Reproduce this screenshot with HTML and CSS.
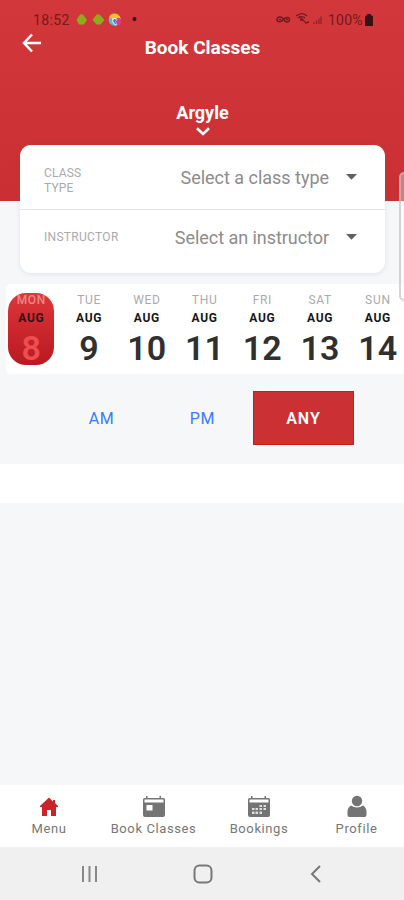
FILE: index.html
```html
<!DOCTYPE html>
<html lang="en">
<head>
<meta charset="utf-8">
<title>Book Classes</title>
<link rel="stylesheet" href="styles.css">
</head>
<body>
<div class="screen">
  <header class="header">
    <div class="status">
      <span class="clock">18:52</span>
      <svg class="apps" width="62" height="16" viewBox="0 0 62 16">
        <path d="M4 2.500h3L11 8l-3 4.500H3L.500 8z" fill="#8bad1c"/>
        <path d="M20.500 2.500h3L28.500 8l-4 4.500h-4L16.500 8z" fill="#8bad1c"/>
        <path d="M33 6c1-6 10-6 12 1l-6-1.500-4 1.500z" fill="#f8c52c"/>
        <path d="M33 5.500l4 .5 0 3.500 4 4.500c-7 0-9-4-8-8.500z" fill="#56bfd8"/>
        <path d="M45 7c1 4-1 6-3 6.500L39.500 9 42 6z" fill="#d63b83"/>
        <path d="M36 6.500l4-1 1.500 2-2 2 2 3-2 1-3-3z" fill="#f3e5e2"/>
        <path d="M38 7l3 .5-2 2 2 3-2-.5-2-3z" fill="#3d76c9"/>
        <circle cx="58.500" cy="7" r="2" fill="#351014"/>
      </svg>
      <svg class="signals" width="48" height="16" viewBox="0 0 48 16" fill="none" stroke="#74191c" stroke-width="1.500">
        <path d="M7.500 7C5.500 4 1 4.500 1 7.500s4 3 6.500 0 6-2.500 6 0-3.500 4-6 0M3 7.500h2M10 7.500h2"/>
        <path d="M20 4c4-3 8-3 11 0M22 6c3-2 5-2 7 0M24 8.500c1-1 2-1 3 0M23 4l6 6M29 11l4-1" stroke-width="1.300"/>
        <path d="M38 12v-2M40.500 12V8.500M43 12V6.500M45 12V4.500" stroke-width="1.200" opacity=".75"/>
      </svg>
      <span class="charge">100%</span>
      <svg class="battery" width="8" height="13" viewBox="0 0 8 13"><path d="M2 1.500V0h4v1.500h1l1 1V12H0V2.500l1-1z" fill="#3b1013"/></svg>
    </div>
    <div class="titlebar">
      <svg class="back" width="20" height="20" viewBox="0 0 20 20" fill="none" stroke="#fff" stroke-width="2.500"><path d="M10 1.500 2 10l8 8.500M2 10h17"/></svg>
      <h1>Book Classes</h1>
    </div>
    <div class="location">
      <span>Argyle</span>
      <svg width="14" height="9" viewBox="0 0 14 9" fill="none" stroke="#fff" stroke-width="2.600"><path d="m1 1.200 6 5.800 6-5.800"/></svg>
    </div>
  </header>

  <section class="filters">
    <div class="filter">
      <span class="label">CLASS<br>TYPE</span>
      <span class="value type">Select a class type</span>
      <svg width="11" height="6" viewBox="0 0 11 6"><path d="M0 0h11L5.500 5.800z" fill="#606060"/></svg>
    </div>
    <div class="filter second">
      <span class="label">INSTRUCTOR</span>
      <span class="value person">Select an instructor</span>
      <svg width="11" height="6" viewBox="0 0 11 6"><path d="M0 0h11L5.500 5.800z" fill="#606060"/></svg>
    </div>
  </section>

  <section class="strip">
    <div class="days">
      <div class="day on"><span class="dow">MON</span><span class="mon">AUG</span><span class="num">8</span></div>
      <div class="day"><span class="dow">TUE</span><span class="mon">AUG</span><span class="num">9</span></div>
      <div class="day"><span class="dow">WED</span><span class="mon">AUG</span><span class="num">10</span></div>
      <div class="day"><span class="dow">THU</span><span class="mon">AUG</span><span class="num">11</span></div>
      <div class="day"><span class="dow">FRI</span><span class="mon">AUG</span><span class="num">12</span></div>
      <div class="day"><span class="dow">SAT</span><span class="mon">AUG</span><span class="num">13</span></div>
      <div class="day"><span class="dow">SUN</span><span class="mon">AUG</span><span class="num">14</span></div>
    </div>
  </section>

  <div class="times">
    <span class="time">AM</span><span class="time">PM</span><span class="time active">ANY</span>
  </div>
  <div class="band"></div>
  <main class="results"></main>

  <nav class="tabs">
    <div class="tab menu">
      <svg width="22" height="24" viewBox="0 0 22 24"><path d="M11 2.500 2 11v1h2v9h5v-6h4v6h5v-9h2v-1l-3-3V5h-2v1.500z" fill="#c9242a"/></svg>
      <span>Menu</span>
    </div>
    <div class="tab book">
      <svg width="22" height="24" viewBox="0 0 22 24"><path d="M0 4.500Q0 3 1.500 3H3V1h1.500v2h12V1H18v2h2.500Q22 3 22 4.500V20q0 2-2 2H2q-2 0-2-2z" fill="#747474"/><path d="M1.500 4.500h19v3h-19zM3.500 10h6v5.500h-6z" fill="#fff"/></svg>
      <span>Book Classes</span>
    </div>
    <div class="tab bookings">
      <svg width="22" height="24" viewBox="0 0 22 24"><path d="M0 4.500Q0 3 1.500 3H3V1h1.500v2h12V1H18v2h2.500Q22 3 22 4.500V20q0 2-2 2H2q-2 0-2-2z" fill="#747474"/><path d="M1.500 4.500h19v3h-19z" fill="#fff"/><path d="M11.500 10H14v2h-2.500zM15.500 10H18v2h-2.500zM4 13h2.500v2H4zM7.500 13H10v2H7.500zM11.500 13H14v2h-2.500zM15.500 13H18v2h-2.500zM4 16.500h2.500V19H4zM7.500 16.500H10V19H7.500zM11.500 16.500H14V19h-2.500z" fill="#dedede"/></svg>
      <span>Bookings</span>
    </div>
    <div class="tab profile">
      <svg width="22" height="24" viewBox="0 0 22 24" fill="#747474"><circle cx="11" cy="6" r="5.200"/><path d="M5 10.500q6 4 12 0 3 1.500 3.500 5.500V20q0 2-2 2h-15q-2 0-2-2v-4q.500-4 3.500-5.500z"/></svg>
      <span>Profile</span>
    </div>
  </nav>
  <footer class="system">
    <svg width="18" height="18" viewBox="0 0 18 18" stroke="#888" stroke-width="2"><path d="M2 1v16M8.500 1v16M15 1v16"/></svg>
    <svg width="20" height="20" viewBox="0 0 20 20" fill="none" stroke="#777" stroke-width="2"><rect x="1.500" y="1.500" width="17" height="17" rx="5"/></svg>
    <svg width="12" height="18" viewBox="0 0 12 18" fill="none" stroke="#777" stroke-width="2"><path d="M10 1 2 9l8 8"/></svg>
  </footer>
  <div class="edge"></div>
</div>
</body>
</html>
```
FILE: styles.css
```css
* { box-sizing: border-box; }
body { margin: 0; font-family: Roboto, sans-serif; }
svg { display: block; flex: none; }
.screen {
  position: relative;
  width: 404px;
  height: 900px;
  display: flex;
  flex-direction: column;
  overflow: hidden;
  background: #f6f7f9;
  white-space: nowrap;
}
.header {
  flex: none;
  height: 201px;
  padding-top: 10px;
  background: linear-gradient(#d2383b, #ca3033);
}
.status {
  display: flex;
  align-items: center;
  height: 20px;
  padding-left: 33px;
  color: #74191c;
  font-size: 14px;
}
.clock { width: 43px; letter-spacing: .35px; }
.signals { margin-left: 138px; }
.charge { width: 37px; margin-left: 4px; letter-spacing: .2px; }
.titlebar {
  display: grid;
  grid-template-columns: 42px 1fr 42px;
  align-items: center;
  height: 34px;
}
.back { margin: -11px 0 0 22px; }
h1 {
  margin: 0;
  padding-left: 1px;
  text-align: center;
  color: #fff;
  font-size: 19px;
  line-height: 36px;
  font-weight: 700;
}
.location {
  display: flex;
  flex-direction: column;
  align-items: center;
  margin-top: 37px;
  padding-left: 1px;
  color: #fff;
  font-size: 18px;
  line-height: 24px;
  font-weight: 700;
}
.location svg { margin-top: 2px; }
.filters {
  position: relative;
  flex: none;
  height: 128px;
  margin: -56px 19px 0 20px;
  border-radius: 11px;
  background: #fff;
  box-shadow: 0 1px 5px rgba(80, 90, 100, .13);
}
.filter {
  display: flex;
  align-items: center;
  height: 65px;
  padding: 0 28px 0 24px;
  border-bottom: 1px solid #e2e2e2;
}
.second { height: 54px; border: 0; }
.label {
  color: #aaa;
  font-size: 12px;
  line-height: 15px;
  margin-top: 8px;
  letter-spacing: .15px;
}
.second .label { margin-top: 0; letter-spacing: .3px; }
.value {
  margin-left: auto;
  margin-right: 17px;
  color: #8c8c8c;
  font-size: 18px;
}
.type { letter-spacing: -.02px; }
.person { letter-spacing: -.05px; }
.strip {
  flex: none;
  height: 90px;
  margin: 11px 0 0 6px;
  padding-top: 9px;
  background: #fff;
  border-radius: 5px 0 0 5px;
}
.days {
  display: grid;
  grid-template-columns: repeat(7, 57.75px);
  margin-left: -3.5px;
}
.day {
  display: flex;
  flex-direction: column;
  align-items: center;
  justify-self: center;
  width: 46px;
  height: 72px;
  border-radius: 18px;
  color: #303030;
}
.on { background: linear-gradient(#dc373b, #b91920); }
.dow {
  height: 15px;
  color: #aaa;
  font-size: 12px;
  line-height: 14px;
  letter-spacing: .7px;
}
.mon {
  height: 20px;
  color: #171717;
  font-size: 12px;
  line-height: 23px;
  font-weight: 700;
  letter-spacing: .8px;
}
.num {
  font-size: 34px;
  line-height: 42px;
  font-weight: 600;
  letter-spacing: .3px;
}
.on .dow { color: #ef8888; font-weight: 500; }
.on .mon { color: #351014; }
.on .num { color: #ed4e50; }
.times {
  display: grid;
  grid-template-columns: repeat(3, 101px);
  flex: none;
  height: 54px;
  margin: 17px 0 0 51px;
}
.time {
  display: flex;
  align-items: center;
  justify-content: center;
  color: #397cf6;
  font-size: 16px;
  font-weight: 400;
  letter-spacing: .6px;
}
.active {
  border: 1px solid #c51d22;
  background: #cb3134;
  color: #fff;
  font-weight: 600;
  letter-spacing: 1px;
}
.band { flex: none; height: 39px; margin-top: 19px; background: #fff; }
.results { flex: 1; }
.tabs {
  display: flex;
  flex: none;
  height: 62px;
  background: #fff;
  color: #777;
  font-size: 13px;
}
.tab {
  display: flex;
  flex-direction: column;
  align-items: center;
  padding-top: 10px;
  letter-spacing: .6px;
}
.tab span { line-height: 17px; margin-top: 1px; }
.menu { width: 98px; }
.book { width: 111px; }
.bookings { width: 100px; }
.profile { width: 95px; }
.system {
  display: flex;
  align-items: center;
  flex: none;
  height: 53px;
  padding-left: 81px;
  gap: 94px;
  background: #f0f0f0;
}
.system svg:last-child { margin-left: 3px; }
.edge {
  position: absolute;
  top: 172px;
  left: 399px;
  width: 10px;
  height: 129px;
  border: 2px solid rgba(190, 190, 190, .65);
  border-radius: 6px;
  background: rgba(255, 255, 255, .35);
}
```
